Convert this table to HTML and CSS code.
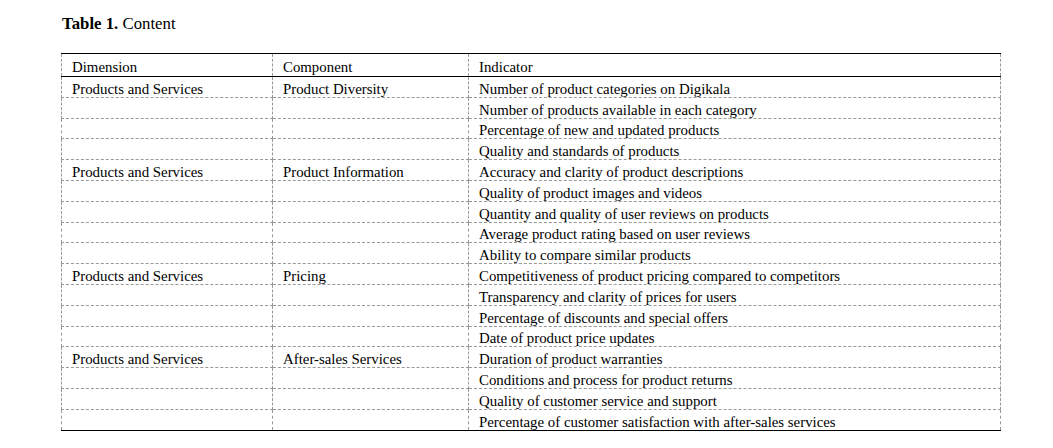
FILE: index.html
```html
<!DOCTYPE html>
<html>
<head>
<meta charset="utf-8">
<link rel="stylesheet" href="styles.css">
</head>
<body>
<div class="page">
  <p class="caption"><b>Table 1.</b> Content</p>
  <table class="content-table">
    <colgroup>
      <col class="c1"><col class="c2"><col class="c3">
    </colgroup>
    <thead>
      <tr><th>Dimension</th><th>Component</th><th>Indicator</th></tr>
    </thead>
    <tbody>
      <tr><td>Products and Services</td><td>Product Diversity</td><td>Number of product categories on Digikala</td></tr>
      <tr><td></td><td></td><td>Number of products available in each category</td></tr>
      <tr><td></td><td></td><td>Percentage of new and updated products</td></tr>
      <tr><td></td><td></td><td>Quality and standards of products</td></tr>
      <tr><td>Products and Services</td><td>Product Information</td><td>Accuracy and clarity of product descriptions</td></tr>
      <tr><td></td><td></td><td>Quality of product images and videos</td></tr>
      <tr><td></td><td></td><td>Quantity and quality of user reviews on products</td></tr>
      <tr><td></td><td></td><td>Average product rating based on user reviews</td></tr>
      <tr><td></td><td></td><td>Ability to compare similar products</td></tr>
      <tr><td>Products and Services</td><td>Pricing</td><td>Competitiveness of product pricing compared to competitors</td></tr>
      <tr><td></td><td></td><td>Transparency and clarity of prices for users</td></tr>
      <tr><td></td><td></td><td>Percentage of discounts and special offers</td></tr>
      <tr><td></td><td></td><td>Date of product price updates</td></tr>
      <tr><td>Products and Services</td><td>After-sales Services</td><td>Duration of product warranties</td></tr>
      <tr><td></td><td></td><td>Conditions and process for product returns</td></tr>
      <tr><td></td><td></td><td>Quality of customer service and support</td></tr>
      <tr><td></td><td></td><td>Percentage of customer satisfaction with after-sales services</td></tr>
    </tbody>
  </table>
</div>
</body>
</html>
```

FILE: styles.css
```css
html, body {
  margin: 0;
  padding: 0;
  background: #fff;
}
body {
  font-family: "Liberation Serif", "Times New Roman", serif;
  color: #000;
}
.page {
  padding: 15px 0 0 61px;
}
.caption {
  margin: 0 0 20px 1px;
  font-size: 16.8px;
  line-height: 18px;
}
.caption b {
  font-weight: bold;
}
.content-table {
  border-collapse: collapse;
  table-layout: fixed;
  width: 939px;
  font-size: 14.85px;
}
.c1 { width: 211px; }
.c2 { width: 196px; }
.c3 { width: 532px; }
.content-table th,
.content-table td {
  font-weight: normal;
  text-align: left;
  vertical-align: bottom;
  padding: 0 10px;
  line-height: 16px;
  border: 1px dashed #999;
  white-space: nowrap;
}
.content-table th {
  height: 21px;
  border-top: 1px solid #000;
  border-bottom: 1px solid #000;
  padding-bottom: 1px;
}
.content-table td {
  height: 19.8px;
  padding-bottom: 0;
}
.content-table tbody tr:last-child td {
  border-bottom: 1px solid #000;
}
```
